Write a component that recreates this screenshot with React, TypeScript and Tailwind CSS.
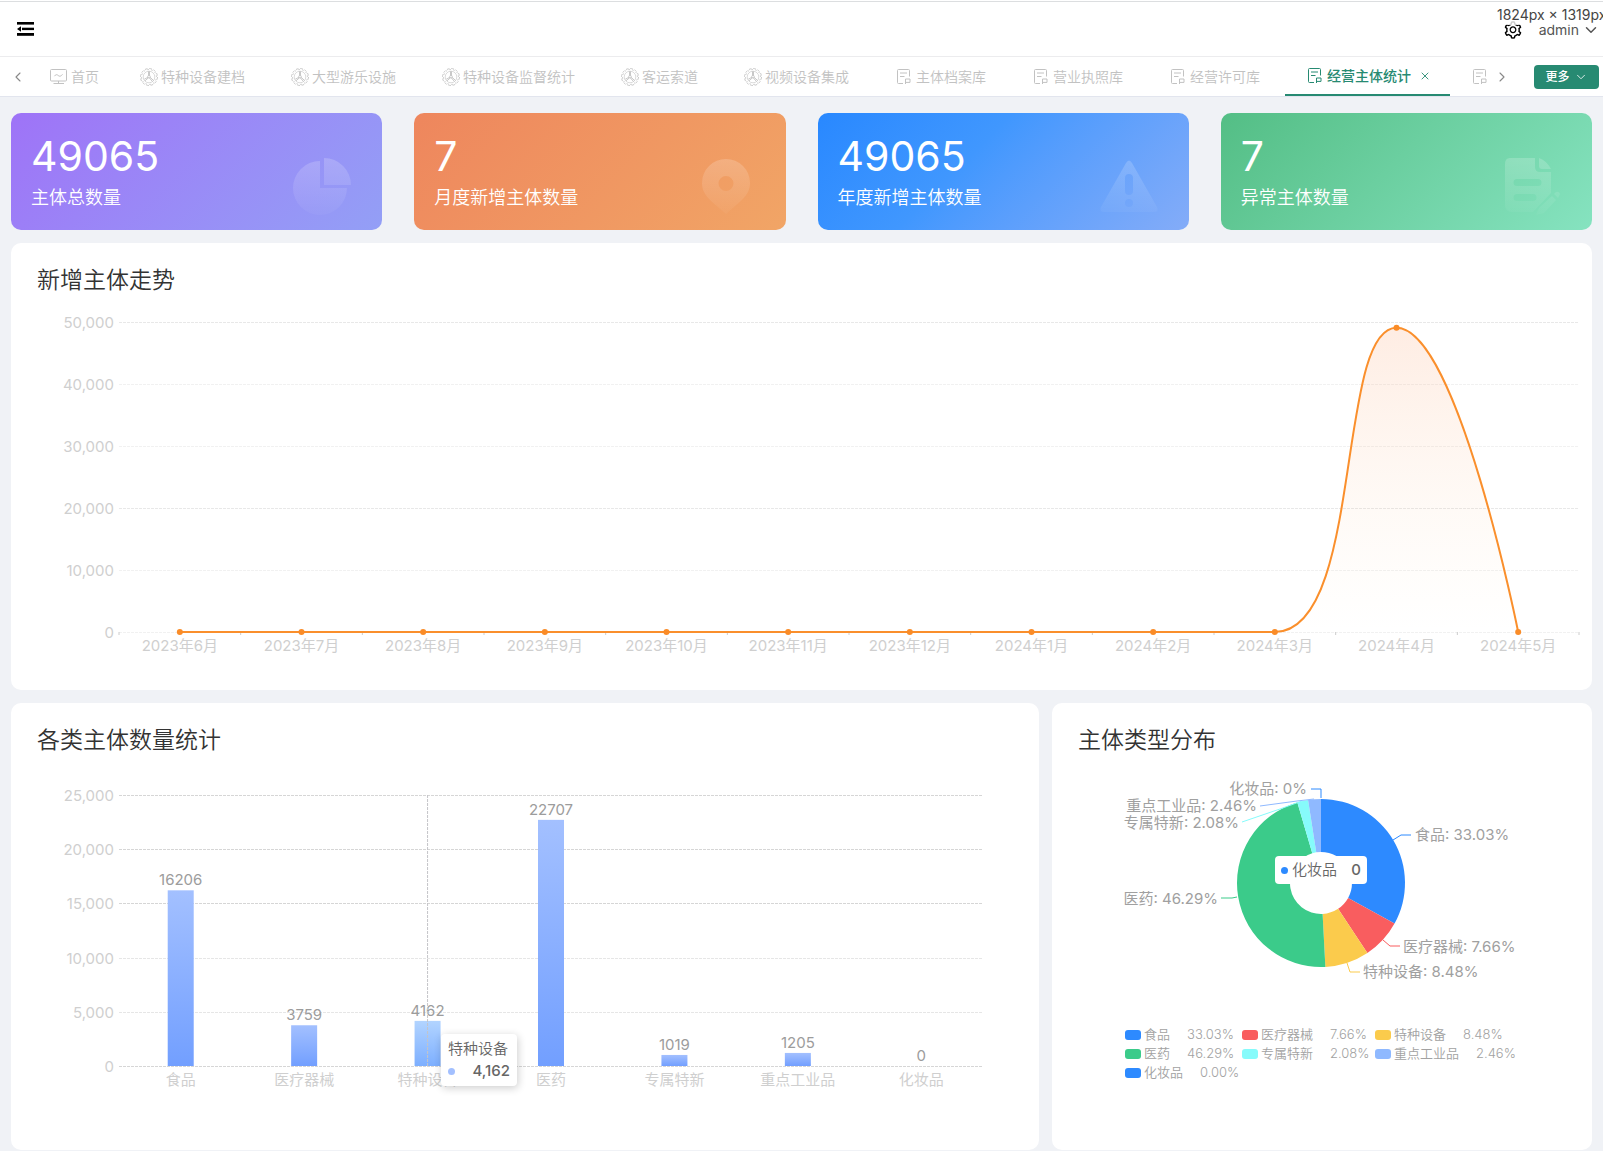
import React from 'react';
import { ChevronDown, ChevronLeft, ChevronRight, X } from 'lucide-react';
import { AiOutlineSetting } from 'react-icons/ai';

type IconKind = 'home' | 'wheel' | 'doc';

interface TabItem {
  label: string;
  icon: IconKind;
}

const tabs: TabItem[] = [
  { label: '特种设备建档', icon: 'wheel' },
  { label: '大型游乐设施', icon: 'wheel' },
  { label: '特种设备监督统计', icon: 'wheel' },
  { label: '客运索道', icon: 'wheel' },
  { label: '视频设备集成', icon: 'wheel' },
  { label: '主体档案库', icon: 'doc' },
  { label: '营业执照库', icon: 'doc' },
  { label: '经营许可库', icon: 'doc' },
];

const trend = [
  { month: '2023年6月', value: 0 },
  { month: '2023年7月', value: 0 },
  { month: '2023年8月', value: 0 },
  { month: '2023年9月', value: 0 },
  { month: '2023年10月', value: 0 },
  { month: '2023年11月', value: 0 },
  { month: '2023年12月', value: 0 },
  { month: '2024年1月', value: 0 },
  { month: '2024年2月', value: 0 },
  { month: '2024年3月', value: 0 },
  { month: '2024年4月', value: 49065 },
  { month: '2024年5月', value: 0 },
];

const categories = [
  { name: '食品', value: 16206 },
  { name: '医疗器械', value: 3759 },
  { name: '特种设备', value: 4162 },
  { name: '医药', value: 22707 },
  { name: '专属特新', value: 1019 },
  { name: '重点工业品', value: 1205 },
  { name: '化妆品', value: 0 },
];

// label: text anchor point, line: leader from the slice to the label
const slices = [
  { name: '食品', percent: 33.03, legend: '33.03%', color: '#2d8aff', line: '341,83 349,78 359,78', x: 363, y: 78, anchor: 'start' },
  { name: '医疗器械', percent: 7.66, legend: '7.66%', color: '#f95d5f', line: '331,183 338,189 348,189', x: 351, y: 190, anchor: 'start' },
  { name: '特种设备', percent: 8.48, legend: '8.48%', color: '#fbcb4c', line: '295,206 298,215 308,215', x: 311, y: 215, anchor: 'start' },
  { name: '医药', percent: 46.29, legend: '46.29%', color: '#3bcb8a', line: '185,140 180,141 169,141', x: 166, y: 142, anchor: 'end' },
  { name: '专属特新', percent: 2.08, legend: '2.08%', color: '#86fbfb', line: '250,44 228,52 190,65', x: 187, y: 66, anchor: 'end' },
  { name: '重点工业品', percent: 2.46, legend: '2.46%', color: '#8fb9ff', line: '262,42 245,44 208,49', x: 205, y: 49, anchor: 'end' },
  { name: '化妆品', percent: 0, legend: '0.00%', color: '#2d8aff', line: '269,41 269,32 259,32', x: 255, y: 32, anchor: 'end' },
] as const;

const TabIcon: React.FC<{ kind: IconKind }> = ({ kind }) => {
  if (kind === 'home') {
    return (
      <svg width="17" height="17" viewBox="0 0 17 17" fill="none" stroke="currentColor" strokeWidth="1" className="shrink-0">
        <rect x="0.5" y="1.5" width="16" height="11.5" rx="1" />
        <path d="M4.5 8.200C5.500 6.300 7 6.300 8.200 7.500S11 8.500 12.500 6.300M3.500 15.500h10.500" />
        <path d="M8.5 13v2" />
      </svg>
    );
  }
  if (kind === 'wheel') {
    return (
      <svg width="18" height="18" viewBox="0 0 18 18" fill="none" stroke="currentColor" strokeWidth="0.9" className="-mr-px shrink-0 overflow-visible">
        <circle cx="9" cy="9" r="8.5" strokeDasharray="2.6 1.85" />
        <circle cx="9" cy="9" r="7.5" strokeDasharray="1.6 2.33" strokeDashoffset="2" />
        <circle cx="9" cy="9" r="5.8" strokeWidth="0.6" />
        <circle cx="9" cy="8.7" r="1.3" />
        <path d="M8.500 3.300v4M9.500 3.300v4M7.900 9.300 4.300 11.200M8.200 10 5 12.800M10.100 9.300l3.500 3.200M9.500 10l3 3.600" />
      </svg>
    );
  }
  return (
    <svg width="17" height="17" viewBox="0 0 17 17" fill="none" stroke="currentColor" strokeWidth="1" className="shrink-0">
      <path d="M14.500 8.500v-6a1 1 0 0 0-1-1H3.500a1 1 0 0 0-1 1v12a1 1 0 0 0 1 1h4.500" />
      <path d="M5 5h7M5 8.500h4.500" />
      <path d="M10.500 16v-5h4.500v3.400h-4.500" />
    </svg>
  );
};

const Header: React.FC = () => (
  <header className="relative flex h-14 items-center justify-between border-y border-t-[#dcdee0] border-b-[#ececee] bg-white pr-[3px] pl-4 font-normal">
    <button type="button" aria-label="收起菜单">
      <svg width="18" height="16" viewBox="0 0 18 16" fill="#000">
        <rect x="1" y="1" width="17" height="2.600" />
        <rect x="6" y="6.700" width="12" height="2.400" />
        <rect x="1" y="12" width="17" height="2.800" />
        <path d="M1 8 5 5.200v5.600z" />
      </svg>
    </button>
    <div className="flex items-center pt-px text-sm text-[#555]">
      <button type="button" aria-label="设置" className="mr-4 text-black">
        <AiOutlineSetting size={20} />
      </button>
      <button type="button" className="flex items-center gap-[3px]">
        admin
        <ChevronDown size={18} strokeWidth={2} />
      </button>
    </div>
    <div className="absolute top-0.5 right-0 w-[106px] overflow-hidden bg-white/80 text-sm leading-[21px] whitespace-nowrap text-[#444]">
      1824px × 1319px
    </div>
  </header>
);

const TabBar: React.FC = () => (
  <div className="flex h-10 items-stretch border-b border-[#e2e5ee] bg-white text-sm text-[#c2c2c2]">
    <button type="button" aria-label="向左" className="flex w-7 shrink-0 items-center justify-center pl-2 text-[#888]">
      <ChevronLeft size={16} strokeWidth={1.6} />
    </button>
    <nav className="flex min-w-0 flex-1 overflow-hidden whitespace-nowrap">
      <button type="button" className="flex shrink-0 items-center gap-1 pr-[18px] pl-[22px]">
        <TabIcon kind="home" />
        首页
      </button>
      {tabs.map((t) => (
        <button key={t.label} type="button" className="flex shrink-0 items-center gap-1 px-[23px]">
          <TabIcon kind={t.icon} />
          {t.label}
        </button>
      ))}
      <button type="button" className="ml-0.5 flex shrink-0 items-center gap-1 border-b-2 border-[#278a72] pr-[19px] pl-[21px] font-medium text-[#278a72]">
        <TabIcon kind="doc" />
        经营主体统计
        <X size={12} strokeWidth={1.8} className="ml-1" />
      </button>
      <button type="button" aria-label="更多主体" className="flex shrink-0 items-center pl-[21px]">
        <TabIcon kind="doc" />
      </button>
    </nav>
    <button type="button" aria-label="向右" className="flex w-[42px] shrink-0 items-center pl-0.5 text-[#888]">
      <ChevronRight size={16} strokeWidth={1.6} />
    </button>
    <button type="button" className="mr-1 flex h-6 w-[65px] shrink-0 items-center justify-center gap-1 self-center rounded-sm bg-[#278a72] text-xs font-medium text-white">
      更多
      <ChevronDown size={14} strokeWidth={1.4} />
    </button>
  </div>
);

interface StatCardProps {
  value: string;
  label: string;
  tone: string;
  children: React.ReactNode;
}

const StatCard: React.FC<StatCardProps> = ({ value, label, tone, children }) => (
  <div className={`flex h-[117px] items-center justify-between rounded-[10px] bg-linear-135 pr-7 pl-5 text-white ${tone}`}>
    <div className="pt-1.5">
      <div className="text-[41px] leading-[46px] font-normal">{value}</div>
      <div className="text-lg leading-[38px]">{label}</div>
    </div>
    <svg width="64" height="64" viewBox="0 0 64 64" fill="url(#iconFade)" className="mt-[30px]">
      {children}
    </svg>
  </div>
);

const Panel: React.FC<{ title: string; children: React.ReactNode }> = ({ title, children }) => (
  <section className="relative min-h-[447px] rounded-[10px] bg-white pt-5">
    <h2 className="pl-[26px] text-[23px] leading-[34px] text-[#333]">{title}</h2>
    {children}
  </section>
);

const TrendChart: React.FC = () => {
  const left = 108;
  const right = 1568;
  const bottom = 335;
  const step = (right - left) / trend.length;
  const px = (i: number) => left + step * (i + 0.5);
  const py = (v: number) => bottom - (v / 50000) * 310;

  const peak = trend.findIndex((d) => d.value > 0);
  const top = py(trend[peak].value);
  const curve =
    `M${px(0)} ${bottom} L${px(peak - 1)} ${bottom} ` +
    `C${px(peak - 1) + step * 0.73} ${bottom} ${px(peak) - step / 2} ${top} ${px(peak)} ${top} ` +
    `C${px(peak) + step / 2} ${top} ${px(peak + 1)} ${bottom} ${px(peak + 1)} ${bottom}`;

  return (
    <svg viewBox="0 0 1581 386" className="block w-full text-[15px] font-normal">
      <defs>
        <linearGradient id="trendFill" x1="0" y1="0" x2="0" y2="1">
          <stop offset="0" stopColor="#fa8c50" stopOpacity="0.16" />
          <stop offset="1" stopColor="#fac88c" stopOpacity="0" />
        </linearGradient>
      </defs>
      {[0, 10000, 20000, 30000, 40000, 50000].map((v) => (
        <g key={v}>
          <line x1={left} x2={right} y1={py(v) + 0.5} y2={py(v) + 0.5} stroke={v === 20000 || v === 50000 ? '#e8e8e8' : '#f1f1f1'} strokeDasharray="3 1" />
          <text x="103" y={py(v) + 6} textAnchor="end" fill="#cfcfcf">
            {v.toLocaleString('en-US')}
          </text>
        </g>
      ))}
      {Array.from({ length: trend.length + 1 }, (_, i) => (
        <line key={i} x1={left + step * i} x2={left + step * i} y1={bottom} y2={bottom + 3} stroke="#ccc" />
      ))}
      <path d={`${curve} Z`} fill="url(#trendFill)" />
      <path d={curve} fill="none" stroke="#fa8f2c" strokeWidth="2" />
      {trend.map((d, i) => (
        <g key={d.month}>
          <circle cx={px(i)} cy={py(d.value)} r="3" fill="#fa8c28" />
          <text x={px(i)} y={bottom + 19} textAnchor="middle" fill="#cfcfcf">
            {d.month}
          </text>
        </g>
      ))}
    </svg>
  );
};

const CategoryChart: React.FC = () => {
  const left = 108;
  const right = 972;
  const bottom = 309;
  const active = 2;
  const step = (right - left) / categories.length;
  const px = (i: number) => left + step * (i + 0.5);
  const py = (v: number) => bottom - (v / 25000) * 271;

  return (
    <>
      <svg viewBox="0 0 1028 386" className="block w-full text-[15px] font-normal">
        <defs>
          <linearGradient id="barFill" x1="0" y1="0" x2="0" y2="1">
            <stop offset="0" stopColor="#a3c0ff" />
            <stop offset="1" stopColor="#729fff" />
          </linearGradient>
          <linearGradient id="barActive" x1="0" y1="0" x2="0" y2="1">
            <stop offset="0" stopColor="#b2d4ff" />
            <stop offset="1" stopColor="#7dafff" />
          </linearGradient>
        </defs>
        {[0, 5000, 10000, 15000, 20000, 25000].map((v) => (
          <g key={v}>
            <line x1={left} x2={right} y1={Math.round(py(v)) + 0.5} y2={Math.round(py(v)) + 0.5} stroke={v === 5000 || v === 10000 ? '#e6e6e6' : '#d6d6d6'} strokeDasharray="3 1" />
            <text x="103" y={py(v) + 6} textAnchor="end" fill="#cfcfcf">
              {v.toLocaleString('en-US')}
            </text>
          </g>
        ))}
        {categories.map((c, i) => (
          <g key={c.name}>
            <rect x={px(i) - 13} y={py(c.value)} width="26" height={bottom - py(c.value)} fill={i === active ? 'url(#barActive)' : 'url(#barFill)'} />
            <text x={px(i)} y={py(c.value) - 5} textAnchor="middle" fill="#9c9c9c">
              {c.value}
            </text>
            <text x={px(i)} y={bottom + 19} textAnchor="middle" fill="#cfcfcf">
              {c.name}
            </text>
          </g>
        ))}
        <line x1={px(active)} x2={px(active)} y1={py(25000)} y2={bottom} stroke="#c4c4c8" strokeDasharray="3 1" />
      </svg>
      <div className="absolute top-[331px] left-[430px] w-[76px] rounded-sm bg-white px-[7px] py-1 text-[15px] leading-[22px] whitespace-nowrap text-[#666] shadow-[1px_2px_8px_rgba(0,0,0,0.2)]">
        <div>特种设备</div>
        <div className="flex items-center justify-between font-medium">
          <span className="size-[7px] rounded-full bg-[#a3c0ff]" />
          4,162
        </div>
      </div>
    </>
  );
};

const ShareChart: React.FC = () => {
  const cx = 269;
  const cy = 126;
  const outer = 84;
  const inner = 31;
  const point = (r: number, p: number) => {
    const a = (p / 100) * Math.PI * 2;
    return `${cx + r * Math.sin(a)} ${cy - r * Math.cos(a)}`;
  };

  let start = 0;
  const arcs = slices.map((s) => {
    const end = start + s.percent;
    const large = s.percent > 50 ? 1 : 0;
    const d = `M${point(outer, start)} A${outer} ${outer} 0 ${large} 1 ${point(outer, end)} L${point(inner, end)} A${inner} ${inner} 0 ${large} 0 ${point(inner, start)} Z`;
    start = end;
    return { name: s.name, color: s.color, d };
  });

  return (
    <>
      <svg viewBox="0 0 540 268" className="block w-full text-[15px] font-normal">
        {arcs.map((a) => (
          <path key={a.name} d={a.d} fill={a.color} />
        ))}
        {slices.map((s) => (
          <g key={s.name}>
            <polyline points={s.line} fill="none" stroke={s.color} strokeWidth="1" />
            <text x={s.x} y={s.y + 5} textAnchor={s.anchor} fill="#a0a0a0">
              {s.name}: {s.percent}%
            </text>
          </g>
        ))}
      </svg>
      <ul className="grid grid-cols-[110px_126px_auto] gap-x-[7px] pl-[73px] text-[13px] leading-[19px] whitespace-nowrap text-[#a2a2a2]">
        {slices.map((s) => (
          <li key={s.name} className="flex items-center">
            <span className="mr-[3px] h-2.5 w-4 shrink-0 rounded-[3px]" style={{ backgroundColor: s.color }} />
            {s.name}
            <span className="ml-[17px]">{s.legend}</span>
          </li>
        ))}
      </ul>
      <div className="absolute top-[153px] left-[223px] flex h-7 w-[92px] items-center rounded-sm bg-white px-1.5 text-[15px] text-[#666]">
        <span className="mr-1 size-[7px] rounded-full bg-[#2d8aff]" />
        化妆品
        <span className="ml-auto font-medium">0</span>
      </div>
    </>
  );
};

export default function App() {
  return (
    <div className="min-h-screen bg-[#f0f2f6] font-[Inter,'Noto_Sans_CJK_SC',sans-serif] font-[350]">
      <div className="bg-white pt-px">
        <Header />
        <TabBar />
      </div>
      <svg width="0" height="0" className="absolute">
        <defs>
          <linearGradient id="iconFade" x1="0" y1="0" x2="0" y2="64" gradientUnits="userSpaceOnUse">
            <stop offset="0" stopColor="#fff" stopOpacity="0.2" />
            <stop offset="1" stopColor="#fff" stopOpacity="0.02" />
          </linearGradient>
        </defs>
      </svg>
      <main className="flex flex-col gap-[13px] px-[11px] pt-4 pb-px">
        <div className="grid grid-cols-4 gap-8">
          <StatCard value="49065" label="主体总数量" tone="from-[#9e73f7] to-[#939ff6]">
            <path d="M30 6v27h27A27 27 0 1 1 30 6z" />
            <path d="M34 3a27 27 0 0 1 27 27H34z" />
          </StatCard>
          <StatCard value="7" label="月度新增主体数量" tone="from-[#ee865d] to-[#f1a566]">
            <path fillRule="evenodd" d="M32 4a24 24 0 0 1 24 24c0 13-10 18-24 31C18 46 8 41 8 28A24 24 0 0 1 32 4zm0 17a7 7 0 1 0 0 15 7 7 0 0 0 0-15z" />
          </StatCard>
          <StatCard value="49065" label="年度新增主体数量" tone="from-[#2888ff] via-[#4097fe] via-40% to-[#84acf8]">
            <path fillRule="evenodd" d="M29 8q3-5 6 0l25 44q2 5-3 5H7q-5 0-3-5zM32 19q-4 0-4 4v13q0 4 4 4t4-4V23q0-4-4-4zm0 25a4 4 0 1 0 0 8 4 4 0 0 0 0-8z" />
          </StatCard>
          <StatCard value="7" label="异常主体数量" tone="from-[#53be85] to-[#86e3c0]">
            <path fillRule="evenodd" d="M10 3h25v9q0 5 5 5h11v21L33 57H12q-7 0-7-7V9q0-6 5-6zm7 21a3.500 3.500 0 0 0 0 7h21a3.500 3.500 0 0 0 0-7zm0 15a3.500 3.500 0 0 0 0 7h16a3.500 3.500 0 0 0 0-7z" />
            <path d="M39 3q8 3 12 11H42q-3 0-3-3z" />
            <path d="M52 41l4 4-12 13-8 2 3-7zM54 39l2-2q3-1 4 2l-2 4z" />
          </StatCard>
        </div>
        <Panel title="新增主体走势">
          <TrendChart />
        </Panel>
        <div className="grid grid-cols-[1028fr_540fr] gap-[13px]">
          <Panel title="各类主体数量统计">
            <CategoryChart />
          </Panel>
          <Panel title="主体类型分布">
            <ShareChart />
          </Panel>
        </div>
      </main>
    </div>
  );
}
